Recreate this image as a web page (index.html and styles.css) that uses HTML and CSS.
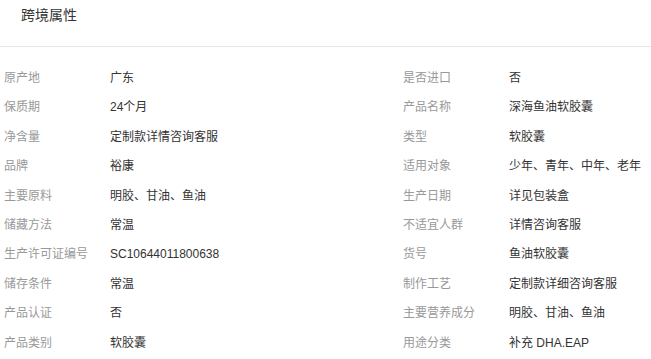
FILE: index.html
```html
<!DOCTYPE html>
<html lang="zh-CN">
<head>
<meta charset="utf-8">
<link rel="stylesheet" href="styles.css">
</head>
<body>
<div class="panel">
  <div class="header"><span class="title">跨境属性</span></div>
  <div class="attrs">
    <div class="row"><span class="label">原产地</span><span class="value">广东</span></div>
    <div class="row"><span class="label">是否进口</span><span class="value">否</span></div>
    <div class="row"><span class="label">保质期</span><span class="value">24个月</span></div>
    <div class="row"><span class="label">产品名称</span><span class="value">深海鱼油软胶囊</span></div>
    <div class="row"><span class="label">净含量</span><span class="value">定制款详情咨询客服</span></div>
    <div class="row"><span class="label">类型</span><span class="value">软胶囊</span></div>
    <div class="row"><span class="label">品牌</span><span class="value">裕康</span></div>
    <div class="row"><span class="label">适用对象</span><span class="value">少年、青年、中年、老年</span></div>
    <div class="row"><span class="label">主要原料</span><span class="value">明胶、甘油、鱼油</span></div>
    <div class="row"><span class="label">生产日期</span><span class="value">详见包装盒</span></div>
    <div class="row"><span class="label">储藏方法</span><span class="value">常温</span></div>
    <div class="row"><span class="label">不适宜人群</span><span class="value">详情咨询客服</span></div>
    <div class="row"><span class="label">生产许可证编号</span><span class="value">SC10644011800638</span></div>
    <div class="row"><span class="label">货号</span><span class="value">鱼油软胶囊</span></div>
    <div class="row"><span class="label">储存条件</span><span class="value">常温</span></div>
    <div class="row"><span class="label">制作工艺</span><span class="value">定制款详细咨询客服</span></div>
    <div class="row"><span class="label">产品认证</span><span class="value">否</span></div>
    <div class="row"><span class="label">主要营养成分</span><span class="value">明胶、甘油、鱼油</span></div>
    <div class="row"><span class="label">产品类别</span><span class="value">软胶囊</span></div>
    <div class="row"><span class="label">用途分类</span><span class="value">补充 DHA.EAP</span></div>
  </div>
</div>
</body>
</html>
```

FILE: styles.css
```css
* { box-sizing: border-box; }
html, body { margin: 0; padding: 0; background: #fff; }
body {
  font-family: "Liberation Sans", "Noto Sans CJK SC", sans-serif;
  color: #333;
}
.panel { width: 651px; }
.header {
  height: 47px;
  padding: 5px 0 0 21px;
  border-bottom: 1px solid #e5e5e5;
}
.title {
  font-size: 14px;
  line-height: 20px;
  color: #333;
}
.attrs {
  display: grid;
  grid-template-columns: 399px 1fr;
  padding: 17px 0 0 4px;
}
.row {
  display: flex;
  font-size: 12px;
  line-height: 29.4px;
  height: 29.4px;
  white-space: nowrap;
}
.label {
  width: 106px;
  color: #999;
  flex: none;
}
.value { color: #333; }
```
